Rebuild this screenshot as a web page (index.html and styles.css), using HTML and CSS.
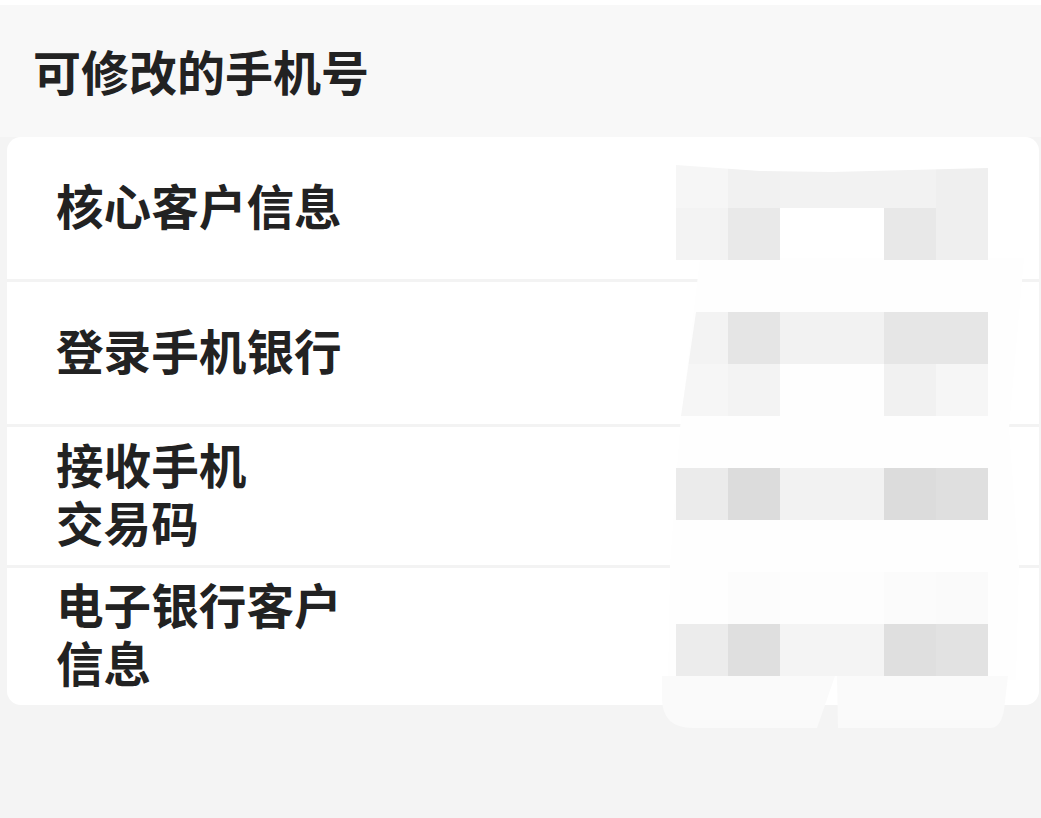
FILE: index.html
```html
<!DOCTYPE html>
<html lang="zh-CN">
<head>
<meta charset="utf-8">
<title>可修改的手机号</title>
<link rel="stylesheet" href="styles.css">
</head>
<body>
<div class="page">
  <div class="topstrip"></div>
  <div class="header">可修改的手机号</div>
  <div class="card">
    <div class="row"><div class="label">核心客户信息</div></div>
    <div class="row"><div class="label">登录手机银行</div></div>
    <div class="row double"><div class="label">接收手机<br>交易码</div></div>
    <div class="row double last"><div class="label">电子银行客户<br>信息</div></div>
  </div>
  <svg class="mosaic" viewBox="0 0 1041 818" width="1041" height="818" aria-hidden="true">
    <defs>
      <clipPath id="mclip">
        <polygon points="676,165 760,171 832,172 988,168 988,676 676,676 676,416 681,416 696,312 700,260 676,260"/>
      </clipPath>
    </defs>
    <polygon fill="#fefefe" points="700,258 1024,258 1009,428 1019,566 1016,680 668,680 670,566 680,428"/>
    <g clip-path="url(#mclip)">
      <rect x="676" y="156" width="52" height="52" fill="#f6f6f6"/>
      <rect x="728" y="156" width="52" height="52" fill="#f1f1f1"/>
      <rect x="780" y="156" width="104" height="52" fill="#f2f2f2"/>
      <rect x="884" y="156" width="52" height="52" fill="#f2f2f2"/>
      <rect x="936" y="156" width="52" height="52" fill="#efefef"/>

      <rect x="676" y="208" width="52" height="52" fill="#f3f3f3"/>
      <rect x="728" y="208" width="52" height="52" fill="#e9e9e9"/>
      <rect x="884" y="208" width="52" height="52" fill="#e8e8e8"/>
      <rect x="936" y="208" width="52" height="52" fill="#efefef"/>

      <rect x="676" y="312" width="52" height="52" fill="#f3f3f3"/>
      <rect x="728" y="312" width="52" height="52" fill="#e5e5e5"/>
      <rect x="780" y="312" width="104" height="52" fill="#f2f2f2"/>
      <rect x="884" y="312" width="52" height="52" fill="#e6e6e6"/>
      <rect x="936" y="312" width="52" height="52" fill="#e6e6e6"/>

      <rect x="676" y="364" width="52" height="52" fill="#f6f6f6"/>
      <rect x="728" y="364" width="52" height="52" fill="#f3f3f3"/>
      <rect x="884" y="364" width="52" height="52" fill="#f1f1f1"/>
      <rect x="936" y="364" width="52" height="52" fill="#f6f6f6"/>

      <rect x="676" y="468" width="52" height="52" fill="#ebebeb"/>
      <rect x="728" y="468" width="52" height="52" fill="#dcdcdc"/>
      <rect x="780" y="468" width="104" height="52" fill="#f2f2f2"/>
      <rect x="884" y="468" width="52" height="52" fill="#dcdcdc"/>
      <rect x="936" y="468" width="52" height="52" fill="#dfdfdf"/>

      <rect x="728" y="572" width="52" height="52" fill="#fcfcfc"/>
      <rect x="780" y="572" width="104" height="52" fill="#fdfdfd"/>
      <rect x="884" y="572" width="52" height="52" fill="#fbfbfb"/>
      <rect x="936" y="572" width="52" height="52" fill="#fafafa"/>

      <rect x="676" y="624" width="52" height="52" fill="#ececec"/>
      <rect x="728" y="624" width="52" height="52" fill="#dfdfdf"/>
      <rect x="780" y="624" width="104" height="52" fill="#f4f4f4"/>
      <rect x="884" y="624" width="52" height="52" fill="#dfdfdf"/>
      <rect x="936" y="624" width="52" height="52" fill="#e2e2e2"/>
    </g>
    <path fill="#fafafa" d="M662,676 H835 L817,728 H693 Q662,728 662,698 Z"/>
    <path fill="#fafafa" d="M837,676 H1008 L1004,710 Q1001,728 990,728 H838 Z"/>
  </svg>
</div>
</body>
</html>
```
FILE: styles.css
```css
* {
  box-sizing: border-box;
}

html, body {
  margin: 0;
  padding: 0;
}

body {
  background: #f4f4f4;
  font-family: "Noto Sans CJK SC", "Noto Sans", sans-serif;
  color: #222222;
}

.page {
  position: relative;
  width: 1041px;
  height: 818px;
  overflow: hidden;
}

.topstrip {
  height: 5px;
  background: #ffffff;
}

.header {
  height: 132px;
  background: #f8f8f8;
  display: flex;
  align-items: center;
  padding: 0 0 2px 33px;
  font-size: 48px;
  font-weight: 700;
  line-height: 1;
}

.card {
  margin: 0 2px 0 7px;
  background: #ffffff;
  border-radius: 14px;
  display: flex;
  flex-direction: column;
}

.row {
  height: 145px;
  display: flex;
  align-items: center;
  padding-left: 49px;
  border-bottom: 3px solid #f3f3f3;
}

.row.double {
  height: 141px;
}

.row.last {
  border-bottom: none;
  height: 137px;
}

.label {
  font-size: 47.6px;
  font-weight: 700;
  line-height: 58px;
  margin-bottom: 7px;
}

.mosaic {
  position: absolute;
  left: 0;
  top: 0;
  pointer-events: none;
}
```
